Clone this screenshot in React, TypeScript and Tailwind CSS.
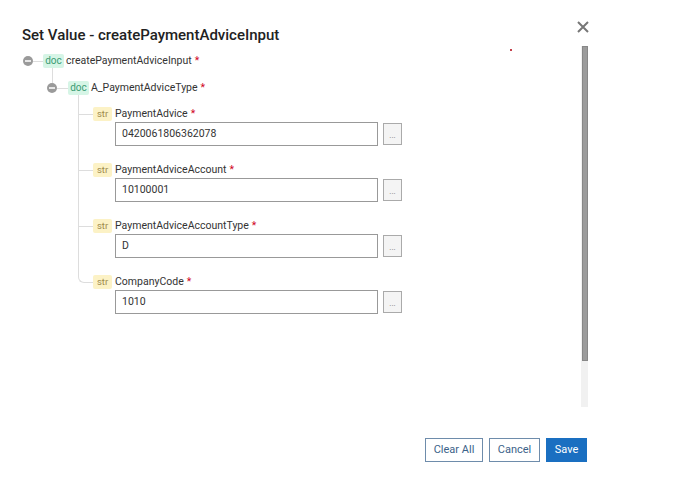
const fields = [
  { name: "PaymentAdvice", value: "0420061806362078" },
  { name: "PaymentAdviceAccount", value: "10100001" },
  { name: "PaymentAdviceAccountType", value: "D" },
  { name: "CompanyCode", value: "1010" },
];

const Req = () => <span className="text-[#d0021b] ml-[3px]">*</span>;

const Collapse = () => (
  <div className="w-[10px] h-[10px] rounded-full bg-[#9a9a9a] flex items-center justify-center shrink-0">
    <div className="w-[6px] h-[2px] bg-[#e6e6e6]" />
  </div>
);

const DocBadge = () => (
  <span className="h-[14px] w-[21px] text-center bg-[#d6f5e6] text-[#3a9c74] text-[10px] leading-[14px] rounded-[2px]">
    doc
  </span>
);

const StrBadge = () => (
  <span className="h-[14px] w-[19px] text-center bg-[#fcf2c6] text-[#9c8a4c] text-[9.5px] leading-[14px] rounded-[2px]">
    str
  </span>
);

export default function App() {
  return (
    <div className="relative w-[690px] h-[486px] bg-white font-['Roboto',sans-serif] text-[#333]">
      <div className="absolute left-[510px] top-[49px] w-[2px] h-[2px] rounded-full bg-[#b0000f]" />

      <div className="flex justify-between h-[46px]">
        <h1 className="pl-[22px] pt-[25px] text-[15px] leading-[20px] font-medium text-[#222]">
          Set Value - createPaymentAdviceInput
        </h1>
        <button className="mr-[101px] mt-[21px] w-[12px] h-[12px]">
          <svg viewBox="0 0 12 12" className="w-[12px] h-[12px]">
            <path d="M1 1 L11 11 M11 1 L1 11" stroke="#777" strokeWidth="2" />
          </svg>
        </button>
      </div>

      <div className="flex h-[361px]">
        <div className="w-[581px] pl-[23px] pt-[8px] text-[10.5px]">
          <div className="flex items-center h-[14px]">
            <Collapse />
            <div className="w-[10px] h-px bg-[#ddd]" />
            <DocBadge />
            <span className="ml-[2px]">createPaymentAdviceInput</span>
            <Req />
          </div>
          <div className="ml-[29px] w-px h-[15px] bg-[#ddd]" />
          <div className="ml-[24px] flex items-center h-[10px]">
            <Collapse />
            <div className="w-[11px] h-px bg-[#ddd]" />
            <div className="h-[14px] flex items-center">
              <DocBadge />
              <span className="ml-[2px]">A_PaymentAdviceType</span>
              <Req />
            </div>
          </div>
          <div className="relative ml-[55px] mt-[2px] pt-[12px]">
            <div className="absolute left-0 top-0 w-[15px] h-[188px] border-l border-b border-[#ddd] rounded-bl-[6px]" />
            {fields.map((f, i) => (
              <div key={f.name} className={i < fields.length - 1 ? "mb-[17px]" : ""}>
                <div className="flex items-center h-[14px]">
                  <div className={"w-[15px] h-px " + (i < fields.length - 1 ? "bg-[#ddd]" : "")} />
                  <StrBadge />
                  <span className="ml-[3px]">{f.name}</span>
                  <Req />
                </div>
                <div className="flex items-center mt-[1px] ml-[37px]">
                  <div className="w-[263px] h-[24px] border border-[#999] px-[6px] flex items-center">
                    {f.value}
                  </div>
                  <div className="ml-[5px] w-[19px] h-[22px] border border-[#aaa] bg-[#f4f4f4] text-[8px] text-[#777] flex items-center justify-center pt-[3px]">
                    ...
                  </div>
                </div>
              </div>
            ))}
          </div>
        </div>
        <div className="w-[7px] h-full bg-[#f1f1f1] flex justify-center">
          <div className="w-[6px] h-[315px] bg-[#9c9c9c] border border-[#888]" />
        </div>
      </div>

      <div className="flex justify-end gap-[6px] pr-[103px] mt-[31px] text-[11px]">
        <button className="w-[58px] h-[24px] border border-[#6e8cab] text-[#3b6289]">Clear All</button>
        <button className="w-[51px] h-[24px] border border-[#6e8cab] text-[#3b6289]">Cancel</button>
        <button className="w-[41px] h-[24px] bg-[#1a6fc1] text-white">Save</button>
      </div>
    </div>
  );
}
